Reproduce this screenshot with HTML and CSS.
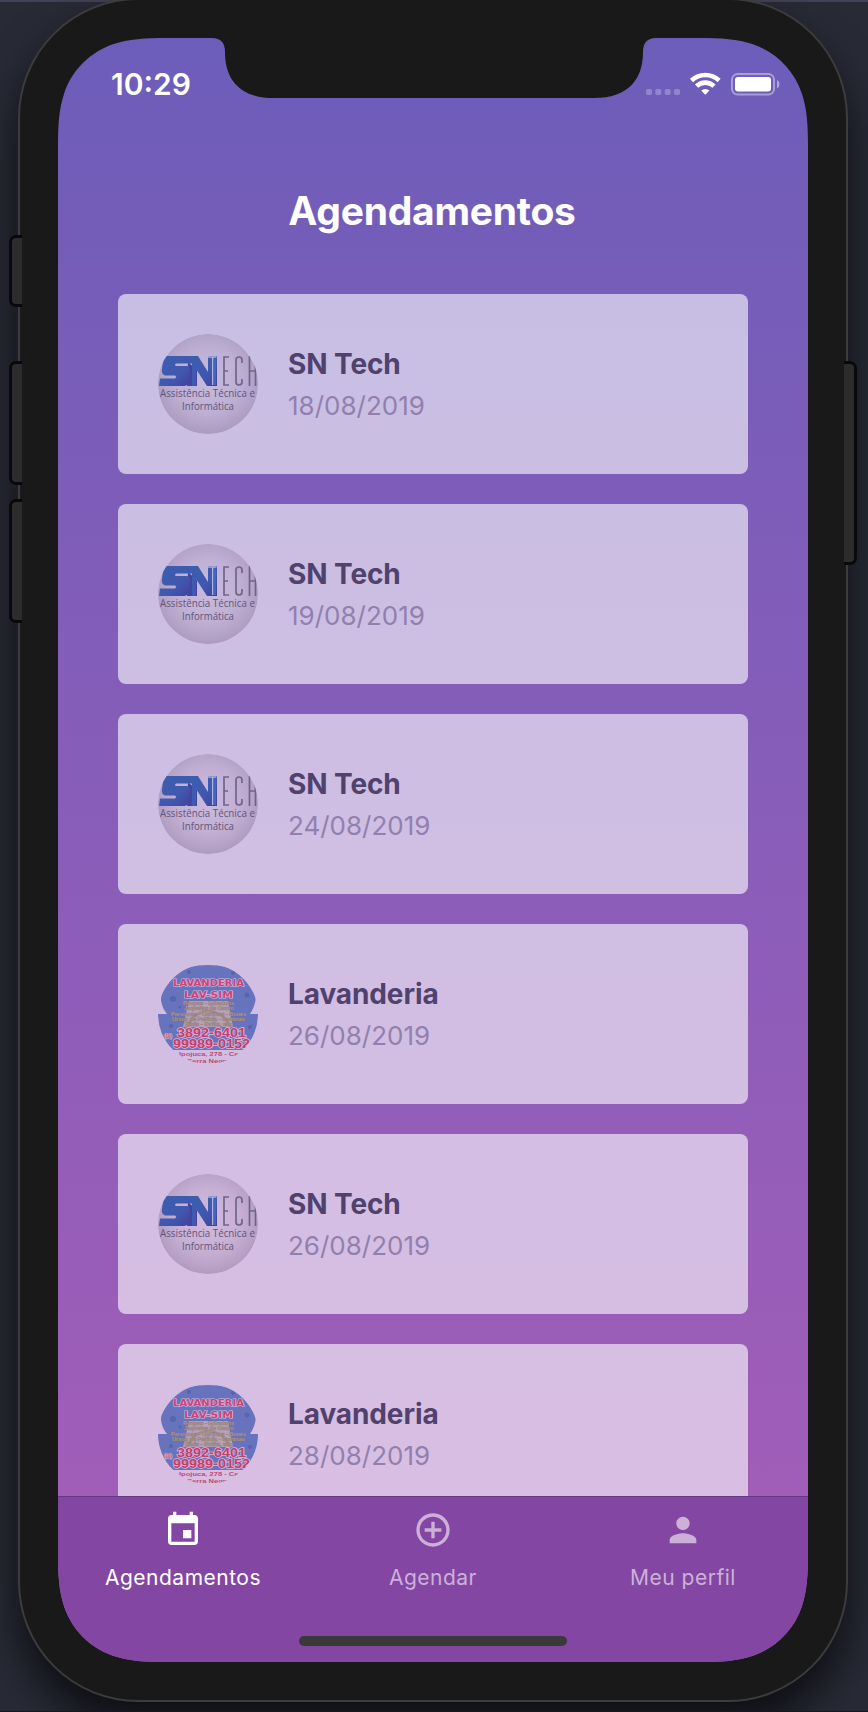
FILE: index.html
```
<!DOCTYPE html>
<html lang="pt-BR">
<head>
<meta charset="utf-8">
<title>Agendamentos</title>
<link rel="stylesheet" href="styles.css">
</head>
<body>
<svg class="defs" width="0" height="0" aria-hidden="true">
  <defs>
    <radialGradient id="silver" cx="50%" cy="46%" r="56%">
      <stop offset="0" stop-color="#a08cab" stop-opacity=".08"/>
      <stop offset=".55" stop-color="#9c86a8" stop-opacity=".25"/>
      <stop offset="1" stop-color="#8d759b" stop-opacity=".52"/>
    </radialGradient>
    <linearGradient id="blue" x1="0" y1="0" x2="1" y2="1">
      <stop offset="0" stop-color="#3b5fae"/>
      <stop offset=".6" stop-color="#4058b0"/>
      <stop offset="1" stop-color="#413f9a"/>
    </linearGradient>
    <clipPath id="round"><circle cx="50" cy="50" r="50"/></clipPath>
    <symbol id="sntech" viewBox="0 0 100 100">
      <g clip-path="url(#round)">
        <circle cx="50" cy="50" r="50" fill="url(#silver)"/>
        <path d="M30 28L39 36V52H29Z" fill="#43449f"/>
        <path d="M8 22H34V29.500H18Q16 31 18 32H29Q33 33 32 39L30 49Q29 52 26 52H1L2 44.500H17Q19 43 17 41.500H7Q3 40 4 35L5 27Q6 22 8 22Z" fill="url(#blue)"/>
        <path d="M31 22H40L50 38V22H59V52H49L38 35V52H34V30Z" fill="url(#blue)"/>
        <path d="M50 23H58.500M54.700 23V51" fill="none" stroke="#a9b3dc" stroke-width="1.500"/>
        <path d="M56.700 25V51" stroke="#4766b9" stroke-width="2.500"/>
        <g fill="none" stroke="#716489" stroke-width="1.700">
          <path d="M71 23H66V51H71M66 37H70M84 29V26Q84 23 81 23Q78 23 78 26V48Q78 51 81 51Q84 51 84 48V45M91.500 22V52M97.500 22V52M91 37H98"/>
        </g>
        <text x="2" y="62.500" textLength="95" lengthAdjust="spacingAndGlyphs" class="logo-sub">Assistência Técnica e</text>
        <text x="24" y="75.500" textLength="52" lengthAdjust="spacingAndGlyphs" class="logo-sub">Informática</text>
      </g>
    </symbol>
    <symbol id="lavsim" viewBox="0 0 100 100">
      <g clip-path="url(#round)">
        <path d="M3 36C3 13 23 1 50 1S98 14 98 33Q97 43 92 50H100V86H0V50H9Q4 44 3 36Z" fill="#6873bd"/>
        <g fill="#5764af"><circle cx="15" cy="35" r="3"/><circle cx="31" cy="8" r="2"/><circle cx="75" cy="9" r="2"/><circle cx="89" cy="31" r="2.500"/><circle cx="13" cy="62" r="2"/><circle cx="92" cy="63" r="2"/><circle cx="22" cy="43" r="1.500"/></g>
        <path d="M31 37H70L75 63H25Z" fill="#b7a1b4"/>
        <path d="M29 64Q35 48 50 47Q67 48 72 64" fill="none" stroke="#a98c7c" stroke-width="2.500"/>
        <text x="15" y="22" textLength="71" lengthAdjust="spacingAndGlyphs" class="lav-title">LAVANDERIA</text>
        <text x="26" y="33.500" textLength="49" lengthAdjust="spacingAndGlyphs" class="lav-title">LAV-SIM</text>
        <g class="lav-list">
          <text x="25" y="41" textLength="51" lengthAdjust="spacingAndGlyphs">Roupas - Edredons</text>
          <text x="26" y="46" textLength="50" lengthAdjust="spacingAndGlyphs">Jaquetas de Couro</text>
          <text x="13" y="51.500" textLength="75" lengthAdjust="spacingAndGlyphs">Persianas - Cortinas - Bonés</text>
          <text x="14" y="56.500" textLength="73" lengthAdjust="spacingAndGlyphs">Ursos de Pelúcia - Cortinas</text>
          <text x="26" y="61.500" textLength="49" lengthAdjust="spacingAndGlyphs">Tênis - Sofás, etc.</text>
        </g>
        <text x="6" y="74" textLength="8" lengthAdjust="spacingAndGlyphs" class="lav-code">(19)</text>
        <text x="19" y="73" textLength="69" lengthAdjust="spacingAndGlyphs" class="lav-phone">3892-6401</text>
        <text x="15" y="84" textLength="77" lengthAdjust="spacingAndGlyphs" class="lav-phone">99989-0152</text>
        <text x="21" y="92" textLength="64" lengthAdjust="spacingAndGlyphs" class="lav-small">Ipojuca, 278 - Cen</text>
        <text x="29" y="98.500" textLength="43" lengthAdjust="spacingAndGlyphs" class="lav-small">Serra Negra</text>
      </g>
    </symbol>
  </defs>
</svg>
<div class="stage">
  <i class="key key-mute"></i><i class="key key-up"></i><i class="key key-down"></i><i class="key key-power"></i>
  <div class="phone">
    <div class="screen">
      <header class="status">
        <span class="time">10:29</span>
        <svg class="indicators" width="136" height="24" viewBox="0 0 136 24" aria-hidden="true">
          <g fill="#fff" fill-opacity=".25"><rect x="0" y="17" width="6" height="6" rx="1.800"/><rect x="9.300" y="17" width="6" height="6" rx="1.800"/><rect x="18.700" y="17" width="6" height="6" rx="1.800"/><rect x="28" y="17" width="6" height="6" rx="1.800"/></g>
          <g fill="none" stroke="#fff" stroke-width="4.600"><path d="M45.500 8.500A20 20 0 0 1 73.100 8.500"/><path d="M50.600 14.200A12.300 12.300 0 0 1 68 14.200"/></g>
          <path d="M55.200 18.500Q59.300 15.400 63.400 18.500L59.900 22.300Q59.300 22.900 58.700 22.300Z" fill="#fff"/>
          <rect x="86" y="2" width="42" height="20.500" rx="5.500" fill="none" stroke="#fff" stroke-opacity=".4" stroke-width="2"/>
          <rect x="89" y="5" width="36" height="14.500" rx="3" fill="#fff"/>
          <path d="M131 8Q133.500 9 133.500 12T131 16.500Z" fill="#fff" fill-opacity=".45"/>
        </svg>
      </header>
      <h1 class="title">Agendamentos</h1>
      <main class="list">
        <article class="card"><svg class="avatar"><use href="#sntech"/></svg><div class="info"><strong>SN Tech</strong><span>18/08/2019</span></div></article>
        <article class="card"><svg class="avatar"><use href="#sntech"/></svg><div class="info"><strong>SN Tech</strong><span>19/08/2019</span></div></article>
        <article class="card"><svg class="avatar"><use href="#sntech"/></svg><div class="info"><strong>SN Tech</strong><span>24/08/2019</span></div></article>
        <article class="card"><svg class="avatar"><use href="#lavsim"/></svg><div class="info"><strong>Lavanderia</strong><span>26/08/2019</span></div></article>
        <article class="card"><svg class="avatar"><use href="#sntech"/></svg><div class="info"><strong>SN Tech</strong><span>26/08/2019</span></div></article>
        <article class="card"><svg class="avatar"><use href="#lavsim"/></svg><div class="info"><strong>Lavanderia</strong><span>28/08/2019</span></div></article>
      </main>
      <nav class="tabs">
        <a class="tab active"><svg viewBox="0 0 24 24"><path d="M17 12h-5v5h5v-5zM16 1v2H8V1H6v2H5c-1.110 0-1.990.9-1.990 2L3 19c0 1.100.89 2 2 2h14c1.100 0 2-.9 2-2V5c0-1.100-.9-2-2-2h-1V1h-2zm3 18H5V8h14v11z"/></svg><span>Agendamentos</span></a>
        <a class="tab"><svg viewBox="0 0 24 24"><path d="M13 7h-2v4H7v2h4v4h2v-4h4v-2h-4V7zm-1-5C6.480 2 2 6.480 2 12s4.480 10 10 10 10-4.480 10-10S17.520 2 12 2zm0 18c-4.410 0-8-3.590-8-8s3.590-8 8-8 8 3.590 8 8-3.590 8-8 8z"/></svg><span>Agendar</span></a>
        <a class="tab"><svg viewBox="0 0 24 24"><path d="M12 12c2.210 0 4-1.790 4-4s-1.790-4-4-4-4 1.790-4 4 1.790 4 4 4zm0 2c-2.670 0-8 1.340-8 4v2h16v-2c0-2.660-5.330-4-8-4z"/></svg><span>Meu perfil</span></a>
      </nav>
      <i class="home"></i>
    </div>
  </div>
</div>
</body>
</html>
```
FILE: styles.css
```
* { box-sizing: border-box; }
body { margin: 0; font-family: Inter, "Liberation Sans", sans-serif; background: #262833; }
.defs { position: absolute; }
.stage {
  position: relative; width: 868px; height: 1712px; overflow: hidden;
  border-bottom: 1px solid #1c1424;
  background: linear-gradient(#404355 2px, #282a36 2px);
}
.phone {
  position: relative; width: 830px; height: 1704px; margin: -2px 0 0 18px; padding: 38px;
  border: 2px solid #3c3c3e; border-radius: 120px; background: #191919;
  box-shadow: 0 24px 44px rgba(0,0,0,.66);
}
.key { position: absolute; z-index: 2; left: 9px; width: 13px; background: #2c2c2c; border: 3px solid #09090b; border-right: 0; border-radius: 7px 0 0 7px; }
.key-mute { top: 235px; height: 72px; }
.key-up { top: 361px; height: 124px; }
.key-down { top: 499px; height: 124px; }
.key-power { left: 844px; top: 361px; height: 204px; border: 3px solid #09090b; border-left: 0; border-radius: 0 7px 7px 0; }
.screen {
  position: relative; display: flex; flex-direction: column; width: 750px; height: 1624px;
  background: linear-gradient(#6d5dba, #a65db8);
  clip-path: path("M110 0H154Q167 0 167 14C167 42 182 60 216 60H536C570 60 585 42 585 14Q585 0 598 0H640C664 0 679 1 695 6.300C718 14.200 735.800 32 743.700 55C749 71 750 86 750 110V1514C750 1538 749 1553 743.700 1569C735.800 1592 718 1609.800 695 1617.700C679 1623 664 1624 640 1624H110C86 1624 71 1623 55 1617.700C32 1609.800 14.200 1592 6.300 1569C1 1553 0 1538 0 1514V110C0 86 1 71 6.300 55C14.200 32 32 14.200 55 6.300C71 1 86 0 110 0Z");
}
.status { display: flex; justify-content: space-between; height: 88px; padding: 34px 26px 0 53px; color: #fff; }
.time { font-size: 30px; line-height: 24px; font-weight: 600; }
.indicators { display: block; }
.title { margin: 61px 0 0; padding-right: 2px; height: 48px; line-height: 48px; text-align: center; color: #fff; font-size: 39px; font-weight: 700; letter-spacing: -.25px; }
.list { flex: 1; min-height: 0; overflow: hidden; margin-top: 59px; padding: 0 60px; display: flex; flex-direction: column; gap: 30px; }
.card { flex: 0 0 180px; display: flex; align-items: center; padding: 0 40px; gap: 30px; border-radius: 8px; background: rgba(255,255,255,.6); }
.avatar { width: 100px; height: 100px; flex: none; }
.info { display: flex; flex-direction: column; }
.info strong { font-size: 28px; line-height: 34px; font-weight: 700; color: #50416d; letter-spacing: -.1px; }
.info span { margin-top: 9px; font-size: 26px; line-height: 32px; color: #9180ae; }
.tabs { flex: 0 0 166px; display: flex; border-top: 1px solid #663985; background: #8347a3; }
.tab { flex: 1; display: flex; flex-direction: column; align-items: center; padding-top: 13px; color: #cdb0d8; font-size: 21px; }
.tab svg { width: 40px; height: 40px; fill: currentColor; }
.tab span { margin-top: 14px; line-height: 28px; letter-spacing: .5px; }
.active { color: #fff; }
.home { position: absolute; left: 241px; top: 1598px; width: 268px; height: 10px; border-radius: 5px; background: #3a3a3a; }
.logo-sub { font: 10px "Open Sans", sans-serif; fill: #62547a; }
.lav-title { font: 700 9.5px "DejaVu Sans", sans-serif; fill: #cb4477; stroke: #dfbcdc; stroke-width: 1.2px; paint-order: stroke; }
.lav-list { font: 700 5px "Liberation Sans", sans-serif; fill: #b09577; stroke: #75709a; stroke-width: .4px; paint-order: stroke; }
.lav-phone { font: 700 12.6px "Liberation Sans", sans-serif; fill: #c13f6d; stroke: #dfbcdc; stroke-width: 1.4px; paint-order: stroke; }
.lav-small { font: 700 6px "Liberation Sans", sans-serif; fill: #be4875; }
.lav-code { font: 700 5px "Liberation Sans", sans-serif; fill: #be4875; stroke: #dfbcdc; stroke-width: 1px; paint-order: stroke; }
```
